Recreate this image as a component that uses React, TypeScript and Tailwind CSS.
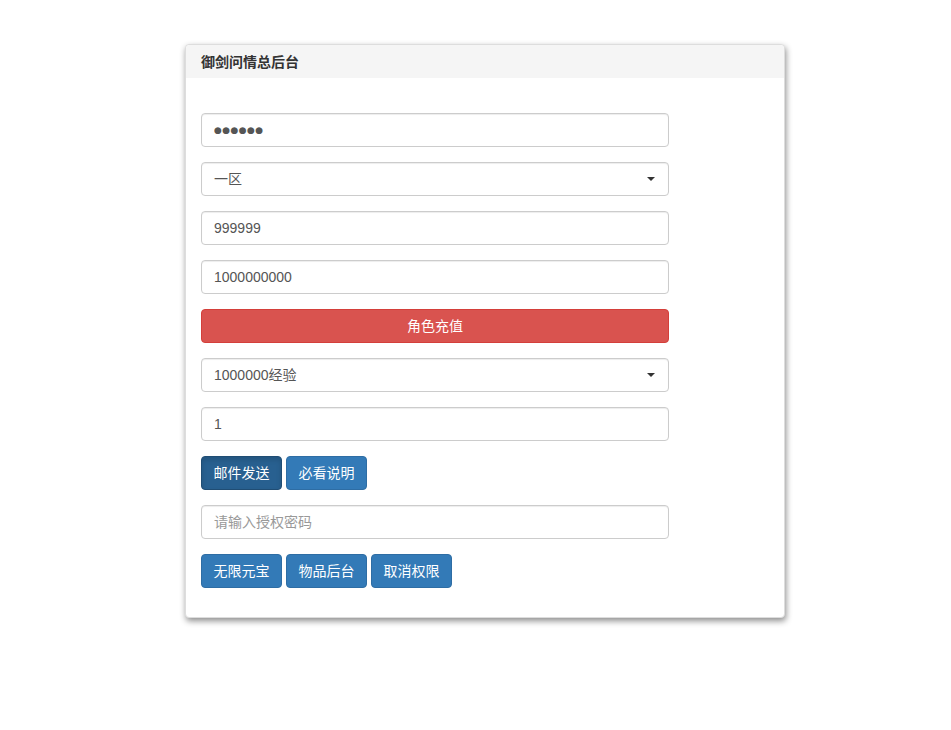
import React from 'react';

const font = { fontFamily: '"Liberation Sans", "Noto Sans CJK SC", sans-serif' };

const boxCls =
  'block h-[34px] w-full rounded border border-[#ccc] bg-white px-3 text-[#555] shadow-[inset_0_1px_1px_rgba(0,0,0,0.075)] outline-none';
const inputCls = `${boxCls} text-[14px]`;

const Field = ({ children }: { children: React.ReactNode }) => <div className="mb-[15px]">{children}</div>;

const FakeSelect = ({ label }: { label: string }) => (
  <div className={`${inputCls} flex items-center justify-between text-[#333]`}>
    <span>{label}</span>
    <span className="mr-[1px] h-0 w-0 border-x-[4px] border-t-[4px] border-x-transparent border-t-[#333]" />
  </div>
);

const BlueButton = ({ label, active }: { label: string; active?: boolean }) => (
  <button
    type="button"
    className={
      active
        ? 'h-[34px] rounded border border-[#204d74] bg-[#286090] px-[11.5px] text-[14px] text-white shadow-[inset_0_3px_5px_rgba(0,0,0,0.125)]'
        : 'h-[34px] rounded border border-[#2e6da4] bg-[#337ab7] px-[11.5px] text-[14px] text-white'
    }
  >
    {label}
  </button>
);

const App = () => {
  return (
    <div className="min-h-[730px] bg-white pt-[44px]" style={font}>
      <div className="ml-[185px] w-[600px] rounded border border-[#ddd] bg-white shadow-[1px_3px_6px_rgba(0,0,0,0.45)]">
        <div className="h-[33px] rounded-t bg-[#f5f5f5] px-[15px] pt-[7px] text-[14px] font-bold text-[#333]">
          御剑问情总后台
        </div>
        <div className="w-[498px] px-[15px] pb-[29px] pt-[35px]">
          <Field>
            <input
              type="text"
              readOnly
              value="●●●●●●"
              className={`${boxCls} text-[9px] tracking-[0.4px]`}
              style={{ fontFamily: '"DejaVu Sans", sans-serif' }}
            />
          </Field>
          <Field>
            <FakeSelect label="一区" />
          </Field>
          <Field>
            <input type="text" readOnly value="999999" className={inputCls} />
          </Field>
          <Field>
            <input type="text" readOnly value="1000000000" className={inputCls} />
          </Field>
          <Field>
            <button
              type="button"
              className="block h-[34px] w-full rounded border border-[#d43f3a] bg-[#d9534f] text-[14px] text-white"
            >
              角色充值
            </button>
          </Field>
          <Field>
            <FakeSelect label="1000000经验" />
          </Field>
          <Field>
            <input type="text" readOnly value="1" className={inputCls} />
          </Field>
          <div className="mb-[15px] flex gap-[4px]">
            <BlueButton label="邮件发送" active />
            <BlueButton label="必看说明" />
          </div>
          <Field>
            <input type="text" placeholder="请输入授权密码" className={`${inputCls} placeholder:text-[#999]`} />
          </Field>
          <div className="flex gap-[4px]">
            <BlueButton label="无限元宝" />
            <BlueButton label="物品后台" />
            <BlueButton label="取消权限" />
          </div>
        </div>
      </div>
    </div>
  );
};

export default App;
